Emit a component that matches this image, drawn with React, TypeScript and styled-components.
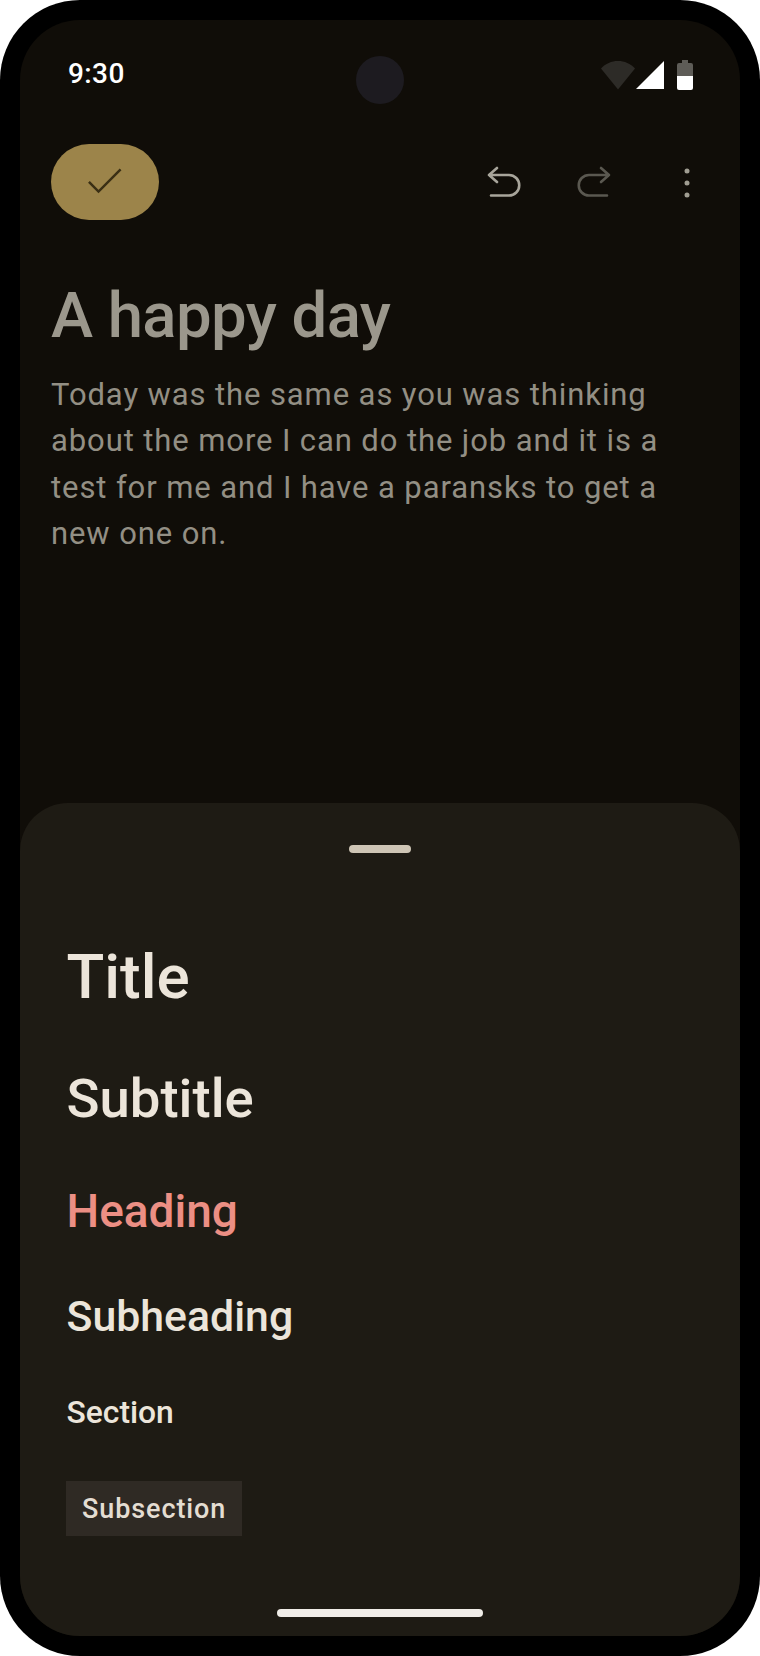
import React from "react";
import styled, { createGlobalStyle } from "styled-components";

const Global = createGlobalStyle`
  html, body { margin: 0; padding: 0; background: #fff; }
  * { box-sizing: border-box; }
  body { font-family: Roboto, "Liberation Sans", sans-serif; }
`;

const Phone = styled.div`
  width: 760px;
  height: 1656px;
  padding: 20px;
  background: #000;
  border-radius: 80px;
`;

const Screen = styled.div`
  position: relative;
  width: 720px;
  height: 1616px;
  display: flex;
  flex-direction: column;
  background: #100d08;
  border-radius: 60px;
  overflow: hidden;
`;

const Main = styled.main`
  flex: 1;
  display: flex;
  flex-direction: column;
`;

const StatusBar = styled.div`
  height: 90px;
  padding: 40px 47px 0 48px;
  display: flex;
  justify-content: space-between;
  align-items: flex-start;
`;

const Time = styled.span`
  color: #fff;
  font-size: 28px;
  line-height: 28px;
  font-weight: 500;
  letter-spacing: 0.4px;
`;

const Camera = styled.div`
  position: absolute;
  top: 36px;
  left: 336px;
  width: 48px;
  height: 48px;
  border-radius: 50%;
  background: #1d1b20;
`;

const StatusIcons = styled.svg`
  display: block;
`;

const Toolbar = styled.div`
  margin-top: 34px;
  padding: 0 50px 0 31px;
  display: flex;
  align-items: center;
`;

const DoneButton = styled.button`
  width: 108px;
  height: 76px;
  padding: 0;
  border: 0;
  border-radius: 38px;
  background: #9c844a;
  display: flex;
  align-items: center;
  justify-content: center;
`;

const ToolIcon = styled.svg<{ $first?: boolean; $gap?: number }>`
  display: block;
  margin-left: ${(p) => (p.$first ? "auto" : `${p.$gap ?? 0}px`)};
`;

const MoreIcon = styled.svg`
  display: block;
  margin: 2px 0 0 72px;
`;

const Note = styled.article`
  padding: 0 31px;
`;

const NoteTitle = styled.h1`
  margin: 56px 0 0;
  color: #9b978c;
  font-size: 63.5px;
  line-height: 80px;
  font-weight: 500;
  letter-spacing: -0.6px;
`;

const NoteBody = styled.p`
  margin: 16px 0 0;
  color: #938f84;
  font-size: 31px;
  line-height: 46.3px;
  font-weight: 400;
  letter-spacing: 0.9px;
`;

const Sheet = styled.section`
  height: 833px;
  padding: 42px 46px 0;
  display: flex;
  flex-direction: column;
  align-items: flex-start;
  background: #1e1b14;
  border-radius: 48px 48px 0 0;
`;

const Handle = styled.div`
  width: 62px;
  height: 8px;
  align-self: center;
  border-radius: 4px;
  background: #cec5b5;
`;

const Style = styled.div<{
  $size: number;
  $line: number;
  $gap: number;
  $color?: string;
}>`
  margin-top: ${(p) => p.$gap}px;
  margin-left: 0.5px;
  font-size: ${(p) => p.$size}px;
  line-height: ${(p) => p.$line}px;
  font-weight: 500;
  color: ${(p) => p.$color ?? "#ece5da"};
`;

const Chip = styled.div`
  margin-top: 49px;
  padding: 0 16px;
  height: 55px;
  display: flex;
  align-items: center;
  background: #2f2a24;
  color: #e4ddd2;
  font-size: 27px;
  font-weight: 500;
  letter-spacing: 0.9px;
`;

const HomeBar = styled.div`
  width: 206px;
  height: 8px;
  margin-top: auto;
  margin-bottom: 19px;
  align-self: center;
  border-radius: 4px;
  background: #f0ede8;
`;

export default function App() {
  return (
    <>
      <Global />
      <Phone>
        <Screen>
          <Camera />
          <Main>
            <StatusBar>
              <Time>9:30</Time>
              <StatusIcons width="94" height="32" viewBox="0 0 94 32">
                <path d="M2 8.500C6.500 3.500 12.500 1 19 1s12.500 2.500 17 7.500L19 29.500Z" fill="#2d2b27" />
                <path d="M37 29L65 1V29Z" fill="#fff" />
                <path d="M78 5a2 2 0 0 1 2-2h3V0h6v3h3a2 2 0 0 1 2 2v11H78Z" fill="#5e5c57" />
                <path d="M78 16h16v12a2 2 0 0 1-2 2H80a2 2 0 0 1-2-2Z" fill="#fff" />
              </StatusIcons>
            </StatusBar>
            <Toolbar>
              <DoneButton aria-label="Done">
                <svg width="36" height="28" viewBox="0 0 36 28" fill="none">
                  <path d="M2 14.500L12 24.500L35 1.500" stroke="#3a2f14" strokeWidth="2.600" transform="scale(0.96)" />
                </svg>
              </DoneButton>
              <ToolIcon $first width="35" height="36" viewBox="0 0 35 36" fill="none">
                <path d="M5 31.500H23A10.250 10.250 0 0 0 23 11H3M11 4L3 11L11 18" stroke="#a8a59b" strokeWidth="2.600" strokeLinecap="round" strokeLinejoin="round" />
              </ToolIcon>
              <ToolIcon $gap={56} width="35" height="36" viewBox="0 0 35 36" fill="none">
                <path d="M30 31.500H12A10.250 10.250 0 0 1 12 11H32M24 4L32 11L24 18" stroke="#5a5850" strokeWidth="2.600" strokeLinecap="round" strokeLinejoin="round" />
              </ToolIcon>
              <MoreIcon width="6" height="30" viewBox="0 0 6 30">
                <circle cx="3" cy="3" r="2.500" fill="#a09d92" />
                <circle cx="3" cy="15" r="2.500" fill="#a09d92" />
                <circle cx="3" cy="27" r="2.500" fill="#a09d92" />
              </MoreIcon>
            </Toolbar>
            <Note>
              <NoteTitle>A happy day</NoteTitle>
              <NoteBody>
                Today was the same as you was thinking about the more I can do
                the job and it is a test for me and I have a paransks to get a
                new one on.
              </NoteBody>
            </Note>
          </Main>
          <Sheet>
            <Handle />
            <Style $size={62} $line={80} $gap={84}>Title</Style>
            <Style $size={54.5} $line={66} $gap={48}>Subtitle</Style>
            <Style $size={46} $line={60} $gap={50} $color="#ec8f84">Heading</Style>
            <Style $size={42.8} $line={50} $gap={50}>Subheading</Style>
            <Style $size={31.8} $line={40} $gap={51}>Section</Style>
            <Chip>Subsection</Chip>
            <HomeBar />
          </Sheet>
        </Screen>
      </Phone>
    </>
  );
}
